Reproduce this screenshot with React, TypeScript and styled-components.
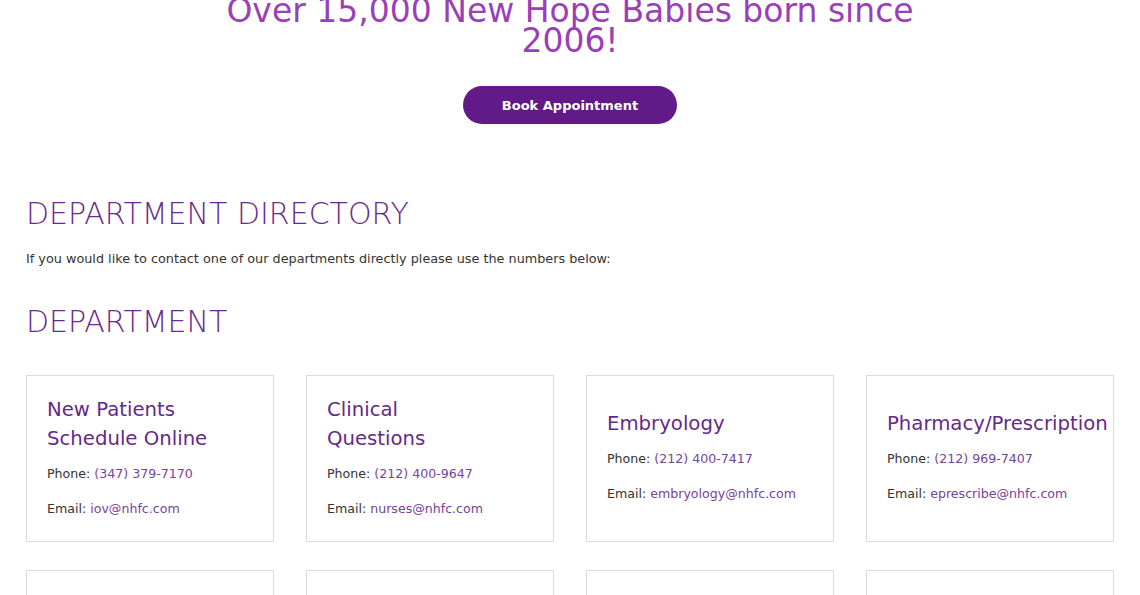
import React from "react";
import styled, { createGlobalStyle } from "styled-components";

const Global = createGlobalStyle`
  html, body { margin: 0; padding: 0; background: #fff; }
  body { font-family: "DejaVu Sans", "Noto Sans", sans-serif; color: #333; overflow: hidden; }
  * { box-sizing: border-box; }
`;

const Page = styled.div`
  width: 1140px;
  padding: 0 26px;
`;

const Hero = styled.section`
  display: flex;
  flex-direction: column;
  align-items: center;
`;

const HeroTitle = styled.h1`
  margin: -4px 0 0;
  font-size: 33px;
  line-height: 30px;
  font-weight: 400;
  color: #9a3fb7;
  text-align: center;
`;

const BookButton = styled.a`
  margin-top: 30px;
  display: flex;
  align-items: center;
  justify-content: center;
  width: 214px;
  height: 38px;
  border-radius: 19px;
  background: #611a87;
  color: #fff;
  font-size: 13px;
  font-weight: 700;
  text-decoration: none;
`;

const SectionTitle = styled.h2<{ $top: number }>`
  margin: ${(p) => p.$top}px 0 0;
  font-size: 30px;
  line-height: 36px;
  font-weight: 300;
  color: #6a2a8e;
  text-transform: uppercase;
`;

const Intro = styled.p`
  margin: 17px 0 0;
  font-size: 12.8px;
  line-height: 20px;
  color: #333;
`;

const Grid = styled.div`
  margin-top: 35px;
  display: grid;
  grid-template-columns: repeat(4, 248px);
  column-gap: 32px;
  row-gap: 28px;
`;

const Card = styled.div`
  height: 167px;
  border: 1px solid #dcdcdc;
  padding: 0 20px 4px;
  display: flex;
  flex-direction: column;
  justify-content: center;
`;

const CardTitle = styled.h3`
  margin: 0 0 11px;
  font-size: 19.7px;
  line-height: 29px;
  font-weight: 400;
  color: #642a8a;
  white-space: nowrap;
`;

const Line = styled.p`
  margin: 0 0 15px;
  font-size: 12.6px;
  line-height: 20px;
  color: #333;
  &:last-child { margin-bottom: 0; }
`;

const Link = styled.a`
  color: #76439b;
  text-decoration: none;
`;

type Dept = { title: React.ReactNode; phone: string; email: string };

const depts: Dept[] = [
  { title: <>New Patients<br />Schedule Online</>, phone: "(347) 379-7170", email: "iov@nhfc.com" },
  { title: <>Clinical<br />Questions</>, phone: "(212) 400-9647", email: "nurses@nhfc.com" },
  { title: "Embryology", phone: "(212) 400-7417", email: "embryology@nhfc.com" },
  { title: "Pharmacy/Prescription", phone: "(212) 969-7407", email: "eprescribe@nhfc.com" },
];

export default function App() {
  return (
    <>
      <Global />
      <Page>
        <Hero>
          <HeroTitle>
            Over 15,000 New Hope Babies born since
            <br />
            2006!
          </HeroTitle>
          <BookButton href="#">Book Appointment</BookButton>
        </Hero>
        <SectionTitle $top={72}>Department Directory</SectionTitle>
        <Intro>If you would like to contact one of our departments directly please use the numbers below:</Intro>
        <SectionTitle $top={35}>Department</SectionTitle>
        <Grid>
          {depts.map((d, i) => (
            <Card key={i}>
              <CardTitle>{d.title}</CardTitle>
              <Line>
                Phone: <Link href="#">{d.phone}</Link>
              </Line>
              <Line>
                Email: <Link href="#">{d.email}</Link>
              </Line>
            </Card>
          ))}
          {[0, 1, 2, 3].map((i) => (
            <Card key={"e" + i} />
          ))}
        </Grid>
      </Page>
    </>
  );
}
